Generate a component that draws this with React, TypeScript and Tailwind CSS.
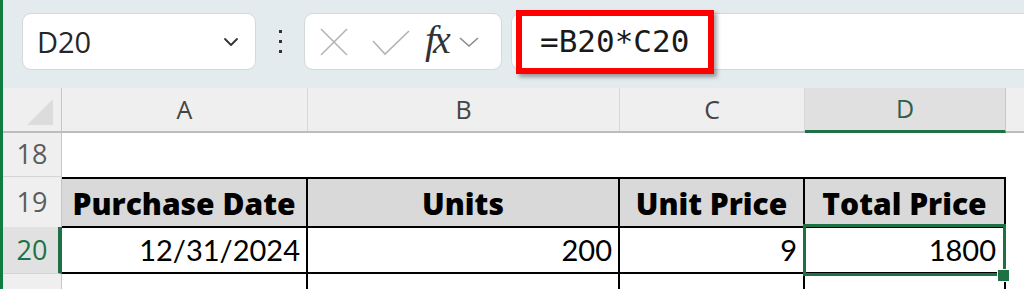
import { ChevronDown } from "lucide-react";

const cols = "grid grid-cols-[59px_246px_312px_185px_201px_1fr]";
const cellFont = { fontFamily: "Lato, 'Open Sans', sans-serif" };
const headFont = { fontFamily: "'Open Sans', Lato, sans-serif" };
const uiFont = { fontFamily: "'Open Sans', 'Noto Sans', sans-serif" };

function RowHead({ n, active }: { n: number | string; active?: boolean }) {
  return (
    <div
      className={
        "flex items-center justify-center text-[27px] font-normal border-b border-[#d4d4d4] " +
        (active
          ? "bg-[#e1e1e1] text-[#1e7145] border-r-4 border-r-[#1e7145] pl-[3px]"
          : "bg-[#efefef] text-[#5c5c5c] border-r border-r-[#c6c6c6]")
      }
      style={uiFont}
    >
      {n}
    </div>
  );
}

export default function App() {
  return (
    <div className="w-[1024px] h-[289px] overflow-hidden flex bg-white">
      <div className="w-[3px] bg-[#107c41] shrink-0" />
      <div className="flex-1 flex flex-col min-w-0">
        {/* toolbar */}
        <div className="h-[88px] bg-[#e4ebee] flex items-start pt-[13px] shrink-0">
          <div className="ml-[19px] w-[234px] h-[57px] bg-white rounded-[9px] border border-[#d3d8db] flex items-center pl-[14px] pr-[12px]">
            <span className="text-[29px] text-[#262626] flex-1 leading-none" style={uiFont}>
              D20
            </span>
            <ChevronDown className="w-[24px] h-[24px] text-[#333]" strokeWidth={1.8} />
          </div>
          <div className="w-[48px] h-[57px] flex flex-col items-center justify-center gap-[7px]">
            <div className="w-[3px] h-[3px] bg-[#333]" />
            <div className="w-[3px] h-[3px] bg-[#333]" />
            <div className="w-[3px] h-[3px] bg-[#333]" />
          </div>
          <div className="w-[198px] h-[57px] bg-white rounded-[9px] border border-[#d3d8db] flex items-center pl-[14px]">
            <svg width="30" height="30" viewBox="0 0 30 30" className="mr-[22px]">
              <path d="M2 2 L28 28 M28 2 L2 28" stroke="#b4b4b4" strokeWidth="1.6" fill="none" />
            </svg>
            <svg width="40" height="28" viewBox="0 0 40 28" className="mr-[14px] mt-[2px]">
              <path d="M2 12 L14 25 L38 2" stroke="#b4b4b4" strokeWidth="1.6" fill="none" />
            </svg>
            <span
              className="text-[40px] italic text-[#333] leading-none tracking-[-3px] mr-[10px] mb-[4px]"
              style={{ fontFamily: "'Liberation Serif', serif" }}
            >
              fx
            </span>
            <svg width="22" height="12" viewBox="0 0 22 12">
              <path d="M2 2 L11 10 L20 2" stroke="#8c8c8c" strokeWidth="1.6" fill="none" />
            </svg>
          </div>
          <div className="relative ml-[9px] flex-1 h-[57px] bg-white rounded-l-[9px] border-y border-l border-[#d3d8db] flex items-center pl-[28px]">
            <span
              className="text-[31px] text-[#1a1a1a] leading-none"
              style={{ fontFamily: "'DejaVu Sans Mono', 'Liberation Mono', monospace" }}
            >
              =B20*C20
            </span>
            <div className="absolute left-[4px] top-[-4px] w-[198px] h-[64px] border-[6px] border-[#ff0000] shadow-[3px_3px_4px_rgba(0,0,0,0.35)]" />
          </div>
        </div>

        {/* column headers */}
        <div className={cols + " h-[45px] shrink-0 border-b-2 border-[#bdbdbd] text-[25px] text-[#444]"} style={uiFont}>
          <div className="bg-[#efefef] border-r border-[#c6c6c6] flex items-end justify-end pr-[8px] pb-[6px]">
            <div className="w-0 h-0 border-l-[26px] border-l-transparent border-b-[26px] border-b-[#dcdcdc]" />
          </div>
          <div className="bg-[#efefef] border-r border-[#d8d8d8] flex items-center justify-center">A</div>
          <div className="bg-[#efefef] border-r border-[#d8d8d8] flex items-center justify-center">B</div>
          <div className="bg-[#efefef] border-r border-[#d8d8d8] flex items-center justify-center">C</div>
          <div className="bg-[#e0e0e0] border-r border-[#c6c6c6] border-b-[3px] border-b-[#1e7145] -mb-[2px] flex items-center justify-center text-[#2f5f45]">
            D
          </div>
          <div className="bg-[#efefef]" />
        </div>

        {/* row 18 */}
        <div className={cols + " h-[44px] shrink-0"}>
          <RowHead n={18} />
          <div />
          <div />
          <div />
          <div />
          <div />
        </div>

        {/* row 19 */}
        <div className={cols + " h-[50px] shrink-0 text-[30px] font-extrabold text-black"} style={headFont}>
          <RowHead n={19} />
          <div className="bg-[#d9d9d9] border-y-2 border-r-2 border-black flex items-center justify-center pt-[2px]">Purchase Date</div>
          <div className="bg-[#d9d9d9] border-y-2 border-r-2 border-black flex items-center justify-center pt-[2px]">Units</div>
          <div className="bg-[#d9d9d9] border-y-2 border-r-2 border-black flex items-center justify-center pt-[2px]">Unit Price</div>
          <div className="bg-[#d9d9d9] border-y-2 border-r-2 border-black flex items-center justify-center pt-[2px]">Total Price</div>
          <div />
        </div>

        {/* row 20 */}
        <div className={cols + " h-[47px] shrink-0 text-[29px] text-black"} style={cellFont}>
          <RowHead n={20} active />
          <div className="border-b-2 border-r-2 border-black flex items-center justify-end pr-[6px]">12/31/2024</div>
          <div className="border-b-2 border-r-2 border-black flex items-center justify-end pr-[6px]">200</div>
          <div className="border-b-2 border-r-2 border-black flex items-center justify-end pr-[6px]">9</div>
          <div className="relative border-b-2 border-r-2 border-black flex items-center justify-end pr-[8px]">
            1800
            <div className="absolute left-[-2px] top-[-3px] right-[-2px] bottom-[-4px] border-[3px] border-[#1e7145]" />
            <div className="absolute right-[-6px] bottom-[-10px] w-[13px] h-[13px] bg-[#1e7145] border border-white" />
          </div>
          <div />
        </div>

        {/* row 21 */}
        <div className={cols + " h-[47px] shrink-0 text-[29px] text-black"} style={cellFont}>
          <RowHead n={21} />
          <div className="border-b-2 border-r-2 border-black flex items-center justify-end pr-[6px] pt-[6px]">1/5/2025</div>
          <div className="border-b-2 border-r-2 border-black" />
          <div className="border-b-2 border-r-2 border-black" />
          <div className="border-b-2 border-r-2 border-black" />
          <div />
        </div>
      </div>
    </div>
  );
}
